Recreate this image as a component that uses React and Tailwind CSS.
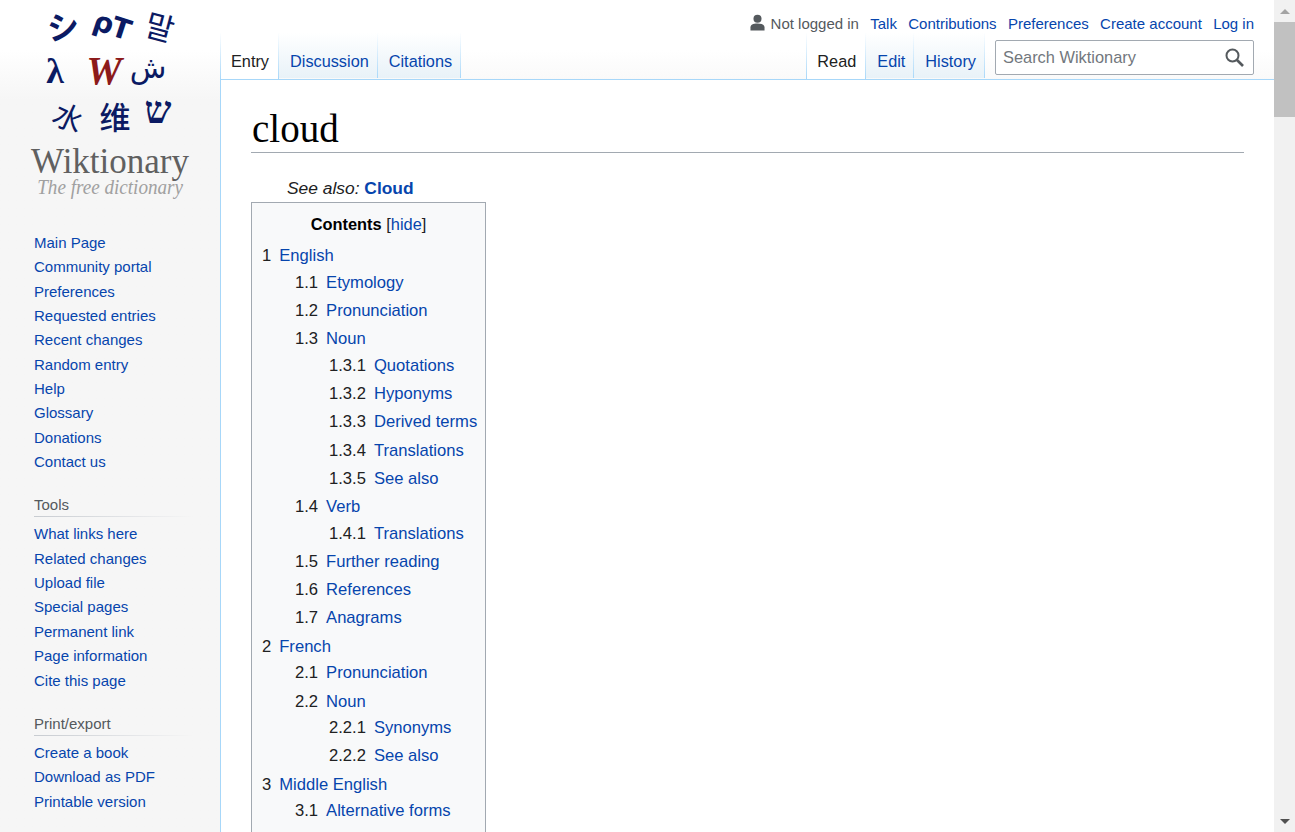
import React from 'react';

const mainNav = ['Main Page', 'Community portal', 'Preferences', 'Requested entries', 'Recent changes', 'Random entry', 'Help', 'Glossary', 'Donations', 'Contact us'];
const tools = ['What links here', 'Related changes', 'Upload file', 'Special pages', 'Permanent link', 'Page information', 'Cite this page'];
const printExport = ['Create a book', 'Download as PDF', 'Printable version'];

// level, number, title, row height (the list is not quite evenly spaced)
const toc = [
  [0, '1', 'English', 'h-[27px]'],
  [1, '1.1', 'Etymology', 'h-[28px]'],
  [1, '1.2', 'Pronunciation', 'h-[28px]'],
  [1, '1.3', 'Noun', 'h-[27px]'],
  [2, '1.3.1', 'Quotations', 'h-[28px]'],
  [2, '1.3.2', 'Hyponyms', 'h-[28px]'],
  [2, '1.3.3', 'Derived terms', 'h-[29px]'],
  [2, '1.3.4', 'Translations', 'h-[28px]'],
  [2, '1.3.5', 'See also', 'h-[28px]'],
  [1, '1.4', 'Verb', 'h-[27px]'],
  [2, '1.4.1', 'Translations', 'h-[28px]'],
  [1, '1.5', 'Further reading', 'h-[28px]'],
  [1, '1.6', 'References', 'h-[28px]'],
  [1, '1.7', 'Anagrams', 'h-[29px]'],
  [0, '2', 'French', 'h-[26px]'],
  [1, '2.1', 'Pronunciation', 'h-[29px]'],
  [1, '2.2', 'Noun', 'h-[26px]'],
  [2, '2.2.1', 'Synonyms', 'h-[28px]'],
  [2, '2.2.2', 'See also', 'h-[29px]'],
  [0, '3', 'Middle English', 'h-[26px]'],
  [1, '3.1', 'Alternative forms', 'h-[28px]'],
];

const indent = ['pl-0', 'pl-[33px]', 'pl-[67px]'];

const serif = { fontFamily: '"Liberation Serif", serif' };
const dejavu = { fontFamily: '"DejaVu Sans", sans-serif' };
const cjkSc = { fontFamily: '"Noto Sans CJK SC", sans-serif' };

// the square logo, glyphs are plain text
const Logo = () => (
  <div className="flex flex-col items-center pt-[3px] h-[201px]">
    <div className="grid grid-cols-[47px_47px_47px] grid-rows-[45px_45px_45px] items-center justify-items-center text-[#0b1a63] leading-none">
      <span className="text-[32px] font-bold -rotate-6 -translate-y-[1px]" style={{ fontFamily: '"Noto Sans CJK JP", sans-serif' }}>シ</span>
      <span className="text-[28px] font-bold rotate-[18deg] translate-x-[2px] -tracking-[1px]" style={dejavu}>ρT</span>
      <span className="text-[31px] rotate-[15deg] translate-x-[3px]" style={{ fontFamily: '"Noto Sans CJK KR", sans-serif' }}>말</span>
      <span className="text-[36px] font-bold -translate-x-[8px]" style={serif}>λ</span>
      <span className="text-[40px] font-bold italic text-[#8c1a1a] -translate-x-[6px]" style={serif}>W</span>
      <span className="text-[30px] -translate-x-[9px] -translate-y-[3px]" style={dejavu}>ش</span>
      <span className="text-[30px] rotate-[25deg] translate-x-[6px]" style={cjkSc}>水</span>
      <span className="text-[31px] font-medium translate-x-[5px]" style={cjkSc}>维</span>
      <span className="text-[38px] font-bold translate-x-[1px] -translate-y-[6px]" style={serif}>ש</span>
    </div>
    <div className="text-[35px] leading-[34px] mt-[7px] text-[#606060]" style={serif}>Wiktionary</div>
    <div className="text-[21px] leading-[16px] italic text-[#a0a0a0] scale-x-[0.91]" style={serif}>The free dictionary</div>
  </div>
);

const NavList = ({ items }) => (
  <ul className="pl-[34px] text-[15px] leading-[24.35px] text-[#0645ad]">
    {items.map((item) => (
      <li key={item}><a>{item}</a></li>
    ))}
  </ul>
);

const PortalTitle = ({ children }) => (
  <div className="ml-[34px] mr-[26px]">
    <div className="text-[15px] leading-[22px] text-[#54595d]">{children}</div>
    <div className="h-px bg-gradient-to-r from-[#c8ccd1] via-[#dfe1e4] to-[#f6f6f6]" />
  </div>
);

const Sidebar = () => (
  <aside className="w-[220px] shrink-0 h-full">
    <Logo />
    <div className="pt-[30px]">
      <NavList items={mainNav} />
    </div>
    <div className="mt-[20px]">
      <PortalTitle>Tools</PortalTitle>
      <div className="pt-[5px]"><NavList items={tools} /></div>
    </div>
    <div className="mt-[20px]">
      <PortalTitle>Print/export</PortalTitle>
      <div className="pt-[5px]"><NavList items={printExport} /></div>
    </div>
  </aside>
);

const Tab = ({ label, selected, first }) => (
  <div className={`pt-[16px] leading-[24px] text-[16.3px] border-r [border-image:linear-gradient(to_bottom,#ffffff,#a7d7f9)_1] ${first ? 'pl-[10px] pr-[9px] border-l' : 'pl-[11px] pr-[8px]'} ${selected ? 'h-[46px] bg-white text-[#202122]' : 'h-[45px] bg-gradient-to-b from-white to-[#e8f2f8] text-[#0645ad]'}`}>
    {label}
  </div>
);

const PersonalBar = () => (
  <div className="absolute right-[20px] top-[13px] flex items-center text-[15px] leading-[22px] text-[#0645ad] gap-[11.3px]">
    <div className="flex items-center gap-[6px] text-[#54595d]">
      <svg width="15" height="18" viewBox="0 0 16 18" className="-mt-[3px]">
        <circle cx="8" cy="4.5" r="4.3" fill="#54595d" />
        <path d="M0.5 17v-3.2C0.5 11 3 9.5 8 9.5s7.500 1.500 7.500 4.300V17z" fill="#54595d" />
      </svg>
      <span>Not logged in</span>
    </div>
    <a>Talk</a>
    <a>Contributions</a>
    <a>Preferences</a>
    <a>Create account</a>
    <a>Log in</a>
  </div>
);

const SearchBox = () => (
  <div className="ml-[10px] mt-[7px] w-[259px] h-[35px] bg-white border border-[#a2a9b1] rounded-[2px] flex items-center justify-between pl-[7px] pr-[9px]">
    <span className="text-[16.4px] text-[#72777d]">Search Wiktionary</span>
    <svg width="19" height="19" viewBox="0 0 19 19" fill="none" stroke="#54595d">
      <circle cx="7.500" cy="7.500" r="6" strokeWidth="2" />
      <path d="M12 12l6 6" strokeWidth="2.600" />
    </svg>
  </div>
);

const Header = () => (
  <header className="relative h-[80px] pt-[33px] flex justify-between items-start border-b border-[#a7d7f9]">
    <PersonalBar />
    <div className="flex items-start">
      <Tab label="Entry" selected first />
      <Tab label="Discussion" />
      <Tab label="Citations" />
    </div>
    <div className="flex items-start pr-[20px]">
      <div className="flex items-start">
        <Tab label="Read" selected first />
        <Tab label="Edit" />
        <Tab label="History" />
      </div>
      <SearchBox />
    </div>
  </header>
);

const Toc = () => (
  <div className="w-[235px] border border-[#a2a9b1] bg-[#f8f9fa] pl-[10px] pt-[9px] pb-[20px]">
    <div className="-ml-[10px] text-center text-[16.4px] leading-[25px] text-[#000] mb-[5px]">
      <span className="font-bold">Contents</span> <span className="text-[#202122]">[<a className="text-[#0645ad]">hide</a>]</span>
    </div>
    <ul>
      {toc.map(([level, num, title, height]) => (
        <li key={num} className={`${height} leading-[28px] text-[16.6px] whitespace-nowrap ${indent[level]}`}>
          <span className="text-[#202122] pr-[8px]">{num}</span>
          <a className="text-[#0645ad]">{title}</a>
        </li>
      ))}
    </ul>
  </div>
);

const Scrollbar = () => (
  <div className="w-[21px] h-full bg-[#f1f1f1] shrink-0 flex flex-col items-center">
    <div className="h-[22px] flex items-center justify-center">
      <div className="w-0 h-0 border-x-[5px] border-x-transparent border-b-[5px] border-b-[#a3a3a3]" />
    </div>
    <div className="w-full h-[95px] bg-[#c1c1c1]" />
    <div className="flex-1" />
    <div className="h-[21px] flex items-center justify-center">
      <div className="w-0 h-0 border-x-[5px] border-x-transparent border-t-[5px] border-t-[#505050]" />
    </div>
  </div>
);

export default function App() {
  return (
    <div className="flex h-[832px] overflow-hidden" style={{ fontFamily: '"Liberation Sans", Arial, sans-serif' }}>
      <div className="flex-1 flex min-w-0 h-full bg-gradient-to-b from-white via-white via-[6%] to-[#f6f6f6] to-[12%]">
        <Sidebar />
        <div className="flex-1 min-w-0 flex flex-col">
          <Header />
          <main className="flex-1 bg-white border-l border-[#a7d7f9] pl-[30px] pr-[30px] pt-[20px]">
            <h1 className="text-[39px] pl-px pt-[5px] leading-[47px] text-black border-b border-[#a2a9b1]" style={serif}>cloud</h1>
            <div className="pl-[36px] mt-[22px] mb-[1px] text-[17.4px] leading-[26px] italic text-[#202122]">
              See also: <a className="not-italic font-bold text-[#0645ad]">Cloud</a>
            </div>
            <Toc />
          </main>
        </div>
      </div>
      <Scrollbar />
    </div>
  );
}
